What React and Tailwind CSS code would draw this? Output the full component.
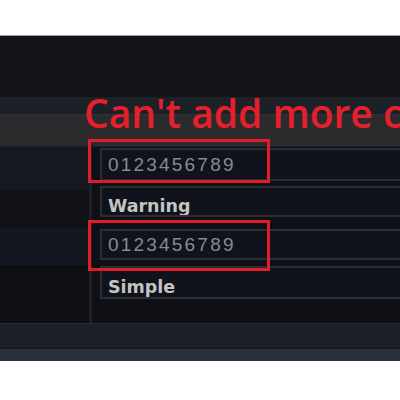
export default function App() {
  const box = "border-2 border-[#2b2d32] bg-[#10131b] overflow-hidden -mr-[8px]";
  const digits = "text-[19px] leading-none tracking-[2.2px] text-[#8a8a8c] font-['Liberation_Sans',sans-serif] pl-[6px]";
  const label = "text-[17.5px] leading-[18px] font-bold text-[#c4c4c4] font-['DejaVu_Sans',sans-serif] pl-[6px]";
  return (
    <div className="relative w-[400px] h-[400px] bg-white overflow-hidden flex flex-col">
      <div className="h-[35px] bg-white shrink-0" />
      <div className="h-px bg-[#a3a3a3] shrink-0" />
      <div className="h-[61px] bg-[#131318] shrink-0" />
      <div className="h-[17px] bg-[#1c2027] shrink-0" />
      <div className="h-px bg-[#30343a] shrink-0" />
      <div className="h-[31px] bg-[#2b2b2e] shrink-0" />
      <div className="h-px bg-[#1e2026] shrink-0" />
      <div className="h-[176px] flex shrink-0">
        <div className="w-[89px] flex flex-col">
          <div className="h-[43px] bg-[#15181e]" />
          <div className="h-[38px] bg-[#101116]" />
          <div className="h-[37px] bg-[#131720]" />
          <div className="flex-1 bg-[#0e0f13]" />
        </div>
        <div className="w-[3px] bg-[#1d1f25]" />
        <div className="flex-1 bg-[#0e1015] pl-[8px] pt-[1px] flex flex-col">
          <div className={`h-[33px] ${box} flex items-center`}>
            <span className={digits}>0123456789</span>
          </div>
          <div className={`h-[31px] mt-[5px] ${box} pt-[9px]`}>
            <div className={label}>Warning</div>
          </div>
          <div className={`h-[31px] mt-[12px] ${box} flex items-center`}>
            <span className={digits}>0123456789</span>
          </div>
          <div className={`h-[33px] mt-[6px] ${box} pt-[10px]`}>
            <div className={label}>Simple</div>
          </div>
        </div>
      </div>
      <div className="h-px bg-[#2a2d33] shrink-0" />
      <div className="h-[23px] bg-[#1c2029] shrink-0" />
      <div className="h-[2px] bg-[#16191e] shrink-0" />
      <div className="h-[12px] bg-[#28313c] shrink-0" />
      <div className="flex-1 bg-white" />

      <div className="absolute left-[84px] top-[93px] whitespace-nowrap text-[39px] leading-none font-semibold text-[#e5202b] font-['Open_Sans',sans-serif]">
        Can't add more characters
      </div>
      <div className="absolute left-[88px] top-[139px] w-[182px] h-[44px] border-[3px] border-[#e01d29]" />
      <div className="absolute left-[88px] top-[220px] w-[182px] h-[51px] border-[3px] border-[#e01d29]" />
    </div>
  );
}
